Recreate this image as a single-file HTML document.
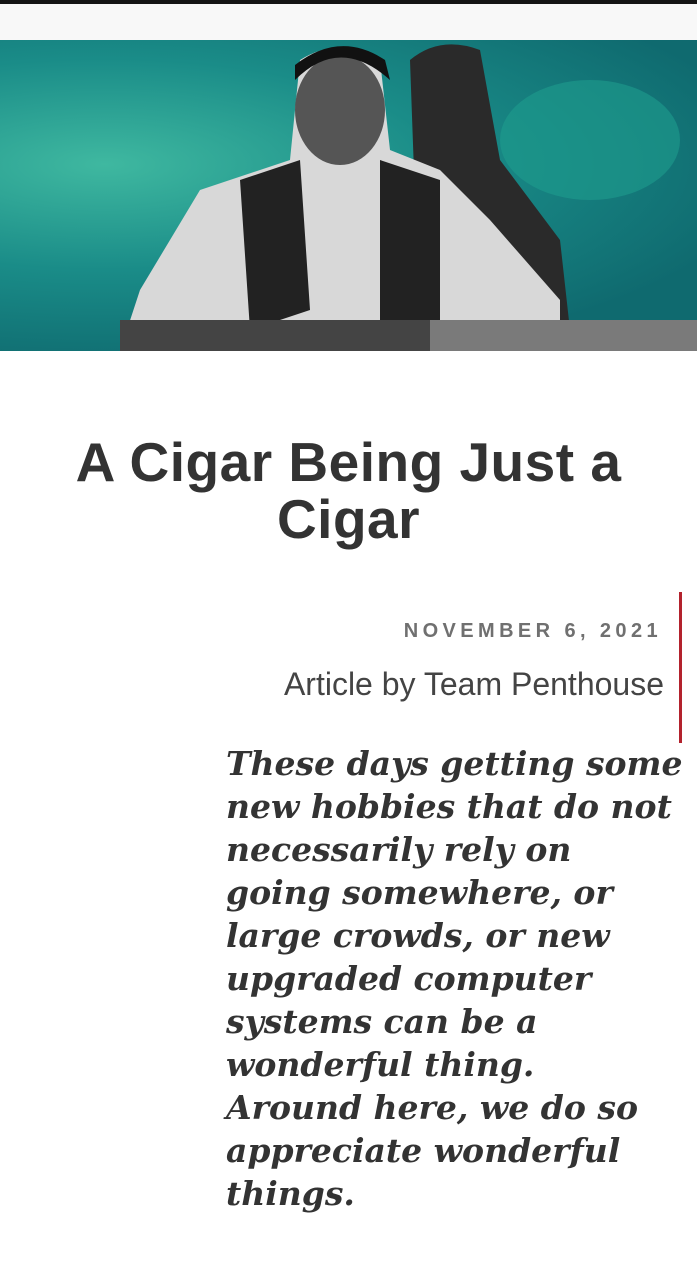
<!DOCTYPE html>
<html><head><meta charset="utf-8"><style>
body{margin:0;width:697px;height:1280px;background:#fff;overflow:hidden;font-family:"Liberation Sans",sans-serif;position:relative}
.top{position:absolute;left:0;top:0;width:697px;height:4px;background:#151515}
.hdr{position:absolute;left:0;top:4px;width:697px;height:36px;background:#f8f8f8}
.img{position:absolute;left:0;top:40px;width:697px;height:311px;background:radial-gradient(ellipse at 15% 40%,#3fb8a0,#1a8c88 40%,#0f6a6f 80%),#1a8c88;overflow:hidden}
h1{position:absolute;left:0;top:434px;width:697px;margin:0;text-align:center;font-size:55px;line-height:57px;font-weight:bold;color:#333;letter-spacing:0.5px}
.date{position:absolute;right:35px;top:620px;font-size:20px;font-weight:bold;letter-spacing:4.4px;color:#707070}
.by{position:absolute;right:33px;top:666px;font-size:32px;color:#444;font-weight:300;white-space:nowrap}
.bar{position:absolute;left:679px;top:592px;width:3px;height:151px;background:#b3222d}
.quote{position:absolute;left:226px;top:742px;width:470px;white-space:nowrap;font-family:"DejaVu Serif",serif;font-style:italic;font-weight:bold;font-size:33px;line-height:43px;color:#333}
</style></head><body>
<div class="top"></div><div class="hdr"></div>
<div class="img"><svg width="697" height="311">
<ellipse cx="590" cy="100" rx="90" ry="60" fill="#1e9d8e" opacity=".6"/>
<path d="M410 20 Q440 -5 480 10 L500 120 L560 200 L570 290 L420 300 Z" fill="#2a2a2a"/>
<path d="M300 20 Q340 -5 380 20 L390 110 L440 130 L490 180 L560 260 L560 310 L120 311 L140 250 L200 150 L290 120 Z" fill="#d8d8d8"/>
<path d="M240 140 L300 120 L310 270 L250 290 Z M380 120 L440 140 L440 280 L380 280 Z" fill="#222"/>
<ellipse cx="340" cy="70" rx="45" ry="55" fill="#555"/>
<path d="M295 40 Q340 -5 390 40 L385 20 Q340 -10 295 25Z" fill="#111"/>
<rect x="120" y="280" width="577" height="31" fill="#444"/>
<rect x="430" y="280" width="267" height="31" fill="#7a7a7a"/>
</svg></div>
<h1>A Cigar Being Just a<br>Cigar</h1>
<div class="bar"></div>
<div class="date">NOVEMBER 6, 2021</div>
<div class="by">Article by Team Penthouse</div>
<div class="quote">These days getting some<br>new hobbies that do not<br>necessarily rely on<br>going somewhere, or<br>large crowds, or new<br>upgraded computer<br>systems can be a<br>wonderful thing.<br>Around here, we do so<br>appreciate wonderful<br>things.</div>
</body></html>
